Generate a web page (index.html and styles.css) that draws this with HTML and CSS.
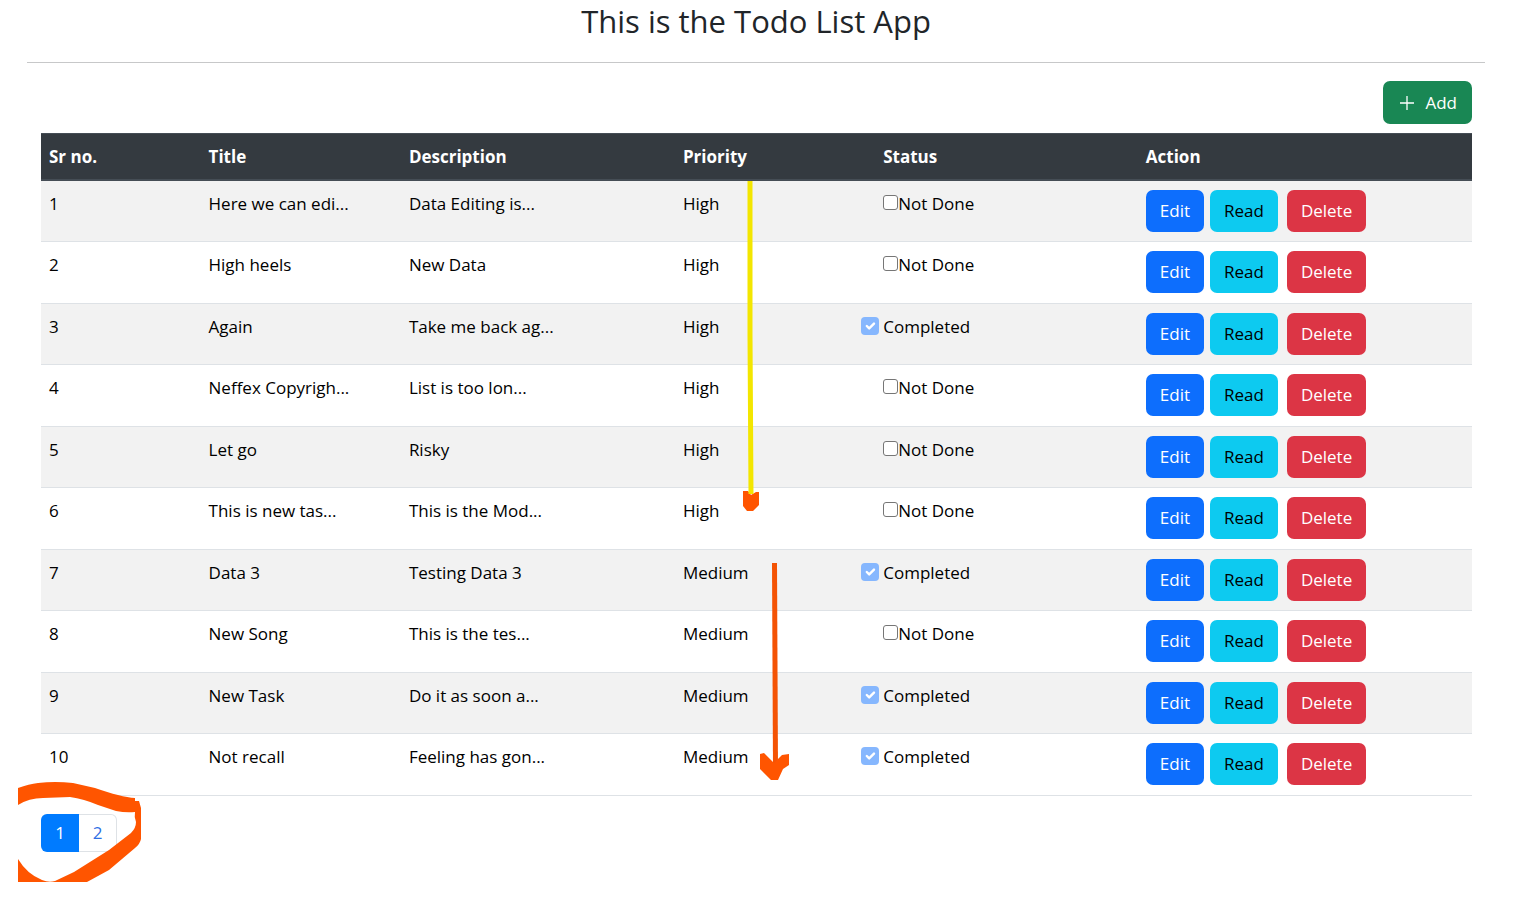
FILE: index.html
```
<!DOCTYPE html>
<html lang="en">
<head>
<meta charset="utf-8">
<title>Todo List App</title>
<link rel="stylesheet" href="styles.css">
</head>
<body>
<main class="page">
  <h1 class="page-title">This is the Todo List App</h1>
  <hr class="rule">
  <div class="content">
    <div class="toolbar">
      <button class="btn btn-add" type="button">
        <svg class="plus" viewBox="0 0 18 18" aria-hidden="true"><path d="M9 2v14M2 9h14"/></svg>
        Add
      </button>
    </div>
    <table class="tasks">
      <colgroup><col class="c-no"><col class="c-title"><col class="c-desc"><col class="c-prio"><col class="c-status"><col></colgroup>
      <thead><tr><th>Sr no.</th><th>Title</th><th>Description</th><th>Priority</th><th>Status</th><th>Action</th></tr></thead>
      <tbody id="rows"></tbody>
    </table>
    <nav class="pager" aria-label="Pages">
      <a class="pager-link active" href="#1">1</a><a class="pager-link" href="#2">2</a>
    </nav>
  </div>
  <svg class="marks" viewBox="0 0 1515 898" aria-hidden="true">
    <path d="M743 491L748 491L751 495L756 492L759 492L759 505L753 511L747 511L743 506Z" fill="#ff5500"/>
    <path d="M750 181L750 335L751 494" fill="none" stroke="#f3e600" stroke-width="5"/>
    <path d="M774.5 563L775.5 768" fill="none" stroke="#f45304" stroke-width="5"/>
    <path d="M760 754L764 753L774 763L782 755L789 754L789 765L783 769L778 780L771 780L760 769Z" fill="#ff5500"/>
    <path fill-rule="evenodd" fill="#ff5500" d="M18 788Q29 784 38 783Q55 781 73 783L95 788Q121 797 135 798L135 801L139 801L141 808L141 839Q140 844 135 848L109 870L87 882L18 882ZM18 805Q29 798 43 798L70 797Q84 799 98 805L116 811Q126 813 135 812Q134 817 136 822Q136 828 131 833L109 850L74 872L55 881Q49 883 42 880Q27 874 18 859Z"/>
  </svg>
</main>
<script src="app.js"></script>
</body>
</html>
```
FILE: styles.css
```
* { box-sizing: border-box; }

body {
  margin: 0;
  background: #fff;
  color: #000;
  font: 17px/27px "Open Sans", "Noto Sans", sans-serif;
}

.page {
  position: relative;
  padding: 0 30px 46px 27px;
}

.page-title {
  margin: 0;
  padding: 1px 0 21px;
  color: #212529;
  font-size: 31px;
  line-height: 40px;
  font-weight: 500;
  text-align: center;
}

.rule {
  margin: 0;
  border: 0;
  border-top: 1px solid #c7c8c9;
}

.content { padding: 18px 13px 0 14px; }

.toolbar {
  display: flex;
  justify-content: flex-end;
  padding-bottom: 9px;
}

.btn {
  height: 42px;
  padding: 0 14px 1px;
  border: 0;
  border-radius: 7px;
  font: inherit;
  color: #fff;
  cursor: pointer;
}

.btn-add {
  display: flex;
  align-items: center;
  gap: 9px;
  height: 43px;
  padding: 0 15px;
  background: #198754;
}

.plus {
  width: 18px;
  height: 18px;
  fill: none;
  stroke: #fff;
  stroke-width: 1.3;
}

.btn-edit { background: #0d6efd; }
.btn-read { margin-left: 6px; background: #0dcaf0; color: #000; }
.btn-delete { margin-left: 9px; background: #dc3545; }

.tasks {
  width: 100%;
  table-layout: fixed;
  border-spacing: 0;
}

.c-no { width: 11.15%; }
.c-title { width: 14%; }
.c-desc { width: 19.15%; }
.c-prio { width: 14%; }
.c-status { width: 18.35%; }

.tasks th {
  padding: 9px 8px;
  border-top: 1px solid #454d55;
  border-bottom: 2px solid #454d55;
  background: #343a40;
  color: #fff;
  text-align: left;
  font-weight: 700;
}

.tasks td {
  padding: 9px 8px;
  border-bottom: 1px solid #dee2e6;
  vertical-align: top;
}

.tasks tr:nth-child(odd) td { background: #f2f2f2; }
.tasks tr:nth-child(even) td { padding-bottom: 10px; }

.actions { display: flex; }

.status {
  display: flex;
  align-items: flex-start;
}

.check {
  flex: none;
  width: 15px;
  height: 15px;
  margin: 5px 0 0;
  appearance: none;
  border: 1px solid #767676;
  border-radius: 3px;
  background: #fff;
}

.check:checked {
  width: 18px;
  height: 18px;
  margin: 4px 4px 0 -22px;
  border: 0;
  border-radius: 4px;
  background: #86b7fe url("data:image/svg+xml,%3Csvg xmlns='http://www.w3.org/2000/svg' viewBox='0 0 20 20'%3E%3Cpath fill='none' stroke='%23fff' stroke-linecap='round' stroke-linejoin='round' stroke-width='3' d='m6 10 3 3 6-6'/%3E%3C/svg%3E") center / 16px no-repeat;
}

.pager {
  display: flex;
  padding-top: 18px;
}

.pager-link {
  width: 38px;
  height: 38px;
  border: 1px solid #dee2e6;
  border-left: 0;
  border-radius: 0 6px 6px 0;
  color: #2f6fe4;
  line-height: 36px;
  text-align: center;
  text-decoration: none;
}

.pager-link.active {
  border: 0;
  border-radius: 6px 0 0 6px;
  background: #007bff;
  color: #fff;
  line-height: 38px;
}

.marks {
  position: absolute;
  top: 0;
  left: 0;
  width: 100%;
  pointer-events: none;
}
```
FILE: app.js
```
const tasks = [
  ["Here we can edi...", "Data Editing is...", "High", false],
  ["High heels", "New Data", "High", false],
  ["Again", "Take me back ag...", "High", true],
  ["Neffex Copyrigh...", "List is too lon...", "High", false],
  ["Let go", "Risky", "High", false],
  ["This is new tas...", "This is the Mod...", "High", false],
  ["Data 3", "Testing Data 3", "Medium", true],
  ["New Song", "This is the tes...", "Medium", false],
  ["New Task", "Do it as soon a...", "Medium", true],
  ["Not recall", "Feeling has gon...", "Medium", true]
];

document.getElementById("rows").innerHTML = tasks.map(([title, text, priority, done], i) => `
  <tr>
    <td>${i + 1}</td><td>${title}</td><td>${text}</td><td>${priority}</td>
    <td><div class="status"><input class="check" type="checkbox" id="s${i}"${done ? " checked disabled" : ""}><label for="s${i}">${done ? "Completed" : "Not Done"}</label></div></td>
    <td><div class="actions"><button class="btn btn-edit" type="button">Edit</button><button class="btn btn-read" type="button">Read</button><button class="btn btn-delete" type="button">Delete</button></div></td>
  </tr>`).join("");
```
